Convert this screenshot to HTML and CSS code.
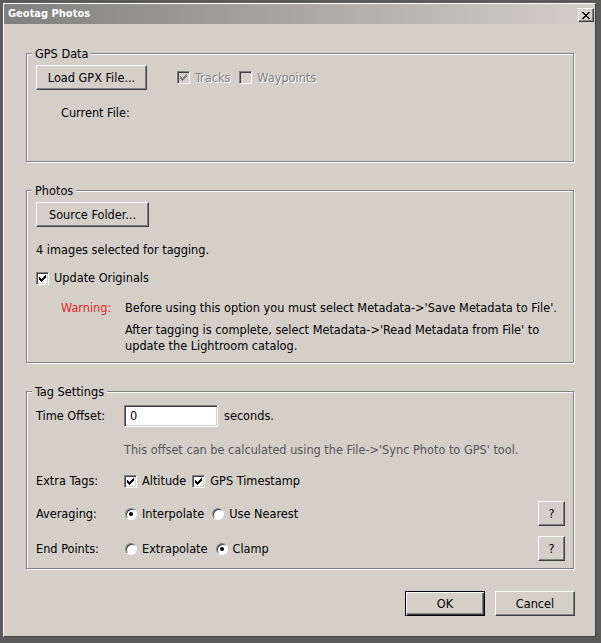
FILE: index.html
```html
<!DOCTYPE html>
<html>
<head>
<meta charset="utf-8">
<title>Geotag Photos</title>
<link rel="stylesheet" href="styles.css">
</head>
<body>
<div class="window">
  <div class="titlebar">
    <span class="title">Geotag Photos</span>
    <span class="close">
      <svg width="8" height="7" viewBox="0 0 8 7" shape-rendering="crispEdges"><path fill="#000" d="M0 0h2v1h-2z M6 0h2v1h-2z M1 1h2v1h-2z M5 1h2v1h-2z M2 2h4v1h-4z M3 3h2v1h-2z M2 4h4v1h-4z M1 5h2v1h-2z M5 5h2v1h-2z M0 6h2v1h-2z M6 6h2v1h-2z"/></svg>
    </span>
  </div>
  <div class="content">
    <fieldset class="group gps">
      <legend>GPS Data</legend>
      <div class="row load-row">
        <span class="btn btn-load">Load GPX File...</span>
        <span class="check-item disabled first-check">
          <span class="cb checked"><svg width="7" height="7" viewBox="0 0 7 7" shape-rendering="crispEdges"><path d="M0 2h1v3h-1z M1 3h1v3h-1z M2 4h1v3h-1z M3 3h1v3h-1z M4 2h1v3h-1z M5 1h1v3h-1z M6 0h1v3h-1z"/></svg></span>
          <span class="lbl">Tracks</span>
        </span>
        <span class="check-item disabled waypoints">
          <span class="cb"></span>
          <span class="lbl">Waypoints</span>
        </span>
      </div>
      <div class="current-file">Current File:</div>
    </fieldset>

    <fieldset class="group photos">
      <legend>Photos</legend>
      <div class="row">
        <span class="btn btn-source">Source Folder...</span>
      </div>
      <div class="count">4 images selected for tagging.</div>
      <div class="check-item update">
        <span class="cb checked"><svg width="7" height="7" viewBox="0 0 7 7" shape-rendering="crispEdges"><path d="M0 2h1v3h-1z M1 3h1v3h-1z M2 4h1v3h-1z M3 3h1v3h-1z M4 2h1v3h-1z M5 1h1v3h-1z M6 0h1v3h-1z"/></svg></span>
        <span class="lbl">Update Originals</span>
      </div>
      <div class="warning">
        <span class="warn-label">Warning:</span>
        <div class="warn-text">
          <p>Before using this option you must select Metadata-&gt;'Save Metadata to File'.</p>
          <p>After tagging is complete, select Metadata-&gt;'Read Metadata from File' to<br>update the Lightroom catalog.</p>
        </div>
      </div>
    </fieldset>

    <fieldset class="group tags">
      <legend>Tag Settings</legend>
      <div class="setting offset-row">
        <span class="label">Time Offset:</span>
        <span class="input">0</span>
        <span class="unit">seconds.</span>
      </div>
      <div class="setting hint-row">
        <span class="label"></span>
        <span class="hint">This offset can be calculated using the File-&gt;'Sync Photo to GPS' tool.</span>
      </div>
      <div class="setting extra-row">
        <span class="label">Extra Tags:</span>
        <span class="check-item">
          <span class="cb checked"><svg width="7" height="7" viewBox="0 0 7 7" shape-rendering="crispEdges"><path d="M0 2h1v3h-1z M1 3h1v3h-1z M2 4h1v3h-1z M3 3h1v3h-1z M4 2h1v3h-1z M5 1h1v3h-1z M6 0h1v3h-1z"/></svg></span>
          <span class="lbl">Altitude</span>
        </span>
        <span class="check-item">
          <span class="cb checked"><svg width="7" height="7" viewBox="0 0 7 7" shape-rendering="crispEdges"><path d="M0 2h1v3h-1z M1 3h1v3h-1z M2 4h1v3h-1z M3 3h1v3h-1z M4 2h1v3h-1z M5 1h1v3h-1z M6 0h1v3h-1z"/></svg></span>
          <span class="lbl">GPS Timestamp</span>
        </span>
      </div>
      <div class="setting radio-row avg-row">
        <span class="label">Averaging:</span>
        <span class="radio-item"><span class="radio on"></span><span class="lbl">Interpolate</span></span>
        <span class="radio-item second"><span class="radio"></span><span class="lbl">Use Nearest</span></span>
        <span class="btn btn-help">?</span>
      </div>
      <div class="setting radio-row end-row">
        <span class="label">End Points:</span>
        <span class="radio-item"><span class="radio"></span><span class="lbl">Extrapolate</span></span>
        <span class="radio-item second"><span class="radio on"></span><span class="lbl">Clamp</span></span>
        <span class="btn btn-help">?</span>
      </div>
    </fieldset>

    <div class="actions">
      <span class="btn btn-action default">OK</span>
      <span class="btn btn-action">Cancel</span>
    </div>
  </div>
</div>
</body>
</html>
```
FILE: styles.css
```css
* { box-sizing: border-box; }
html, body { margin: 0; padding: 0; }
body {
  background: #5b5b5b;
  width: 601px;
  height: 643px;
  overflow: hidden;
  font-family: "DejaVu Sans Condensed", "DejaVu Sans", sans-serif;
  font-size: 12.6px;
  line-height: 16px;
  color: #000;
}
.window {
  margin: 3px 0 0 3px;
  width: 593px;
  height: 634px;
  background: #d4d0c8;
  border-left: 1px solid #fff;
  border-top: 1px solid #fff;
  border-right: 1px solid #404040;
  border-bottom: 1px solid #404040;
  display: flex;
  flex-direction: column;
}
.titlebar {
  height: 20px;
  display: flex;
  align-items: center;
  justify-content: space-between;
  padding: 0 1px 0 4px;
  background: linear-gradient(to right, #808080, #d4d0c8);
  color: #fff;
  font-weight: bold;
  font-size: 11px;
}
.close {
  width: 16px;
  height: 14px;
  margin-top: 2px;
  background: #d4d0c8;
  border: 1px solid;
  border-color: #fff #404040 #404040 #fff;
  box-shadow: inset -1px -1px 0 #808080;
  display: flex;
  align-items: center;
  justify-content: center;
}
.close svg { display: block; }
.content {
  flex: 1;
  padding: 22px 21px 0 22px;
  display: flex;
  flex-direction: column;
}
.group {
  margin: 0;
  padding: 0 8px 0 9px;
  border: 1px solid #808080;
  box-shadow: inset 1px 1px 0 #fff, 1px 1px 0 #fff;
  min-width: 0;
}
.group legend {
  padding: 0 3px;
  margin-left: -4px;
  line-height: 15px;
  background: #d4d0c8;
}
.gps { height: 116px; }
.photos { height: 180px; margin-top: 21px; }
.tags { height: 185px; margin-top: 21px; }

.row { display: flex; align-items: center; margin-top: 4px; }

.btn {
  display: inline-flex;
  align-items: center;
  justify-content: center;
  height: 25px;
  background: #d4d0c8;
  border: 1px solid;
  border-color: #fff #404040 #404040 #fff;
  box-shadow: inset -1px -1px 0 #808080;
  color: #000;
  white-space: nowrap;
}
.btn-load { width: 111px; }
.btn-source { width: 113px; }
.btn-help { width: 27px; margin-left: auto; }
.btn-action { width: 80px; }
.btn.default {
  border-color: #000;
  box-shadow: inset 1px 1px 0 #fff, inset -1px -1px 0 #404040, inset -2px -2px 0 #808080;
}

.check-item { display: inline-flex; align-items: center; }
.cb {
  width: 13px;
  height: 13px;
  flex: none;
  background: #fff;
  border: 1px solid;
  border-color: #808080 #fff #fff #808080;
  box-shadow: inset 1px 1px 0 #404040, inset -1px -1px 0 #d4d0c8;
  display: flex;
  align-items: center;
  justify-content: center;
}
.cb svg { display: block; fill: #000; }
.lbl { margin-left: 5px; white-space: nowrap; }
.check-item + .check-item { margin-left: 6px; }
.check-item.waypoints { margin-left: 9px; }
.first-check { margin-left: 30px; }
.disabled .cb { background: #d4d0c8; }
.disabled .cb svg { fill: #808080; }
.disabled .lbl { color: #808080; text-shadow: 1px 1px 0 #fff; }

.current-file { margin-top: 15px; padding-left: 25px; }

.count { margin-top: 15px; }
.update { margin-top: 12px; display: flex; }
.warning {
  margin-top: 14px;
  padding-left: 25px;
  display: flex;
}
.warn-label { color: #e3262a; width: 64px; flex: none; }
.warn-text p { margin: 0; white-space: nowrap; }
.warn-text p + p { margin-top: 6px; }

.setting { display: flex; align-items: center; }
.setting .label { width: 88px; flex: none; }
.offset-row { margin-top: 6px; height: 22px; }
.input {
  width: 94px;
  height: 22px;
  background: #fff;
  border: 1px solid;
  border-color: #808080 #fff #fff #808080;
  box-shadow: inset 1px 1px 0 #404040, inset -1px -1px 0 #d4d0c8;
  padding-left: 5px;
  line-height: 20px;
}
.unit { margin-left: 6px; }
.hint-row { margin-top: 15px; }
.hint { color: #555; white-space: nowrap; }
.extra-row { margin-top: 15px; }
.avg-row { margin-top: 12px; }
.end-row { margin-top: 10px; }
.radio-item { display: inline-flex; align-items: center; }
.radio-item.second { margin-left: 7px; }
.radio {
  width: 12px;
  height: 12px;
  flex: none;
  margin-left: 1px;
  border-radius: 50%;
  background: #fff;
  border: 1px solid;
  border-color: #808080 #fff #fff #808080;
  box-shadow: inset 1px 1px 0 #404040;
  display: flex;
  align-items: center;
  justify-content: center;
}
.radio-item .lbl { margin-left: 5px; }
.radio.on::after {
  content: "";
  width: 4px;
  height: 4px;
  border-radius: 50%;
  background: #000;
}

.actions {
  display: flex;
  justify-content: flex-end;
  gap: 10px;
  margin-top: 22px;
  margin-right: -1px;
}
```
